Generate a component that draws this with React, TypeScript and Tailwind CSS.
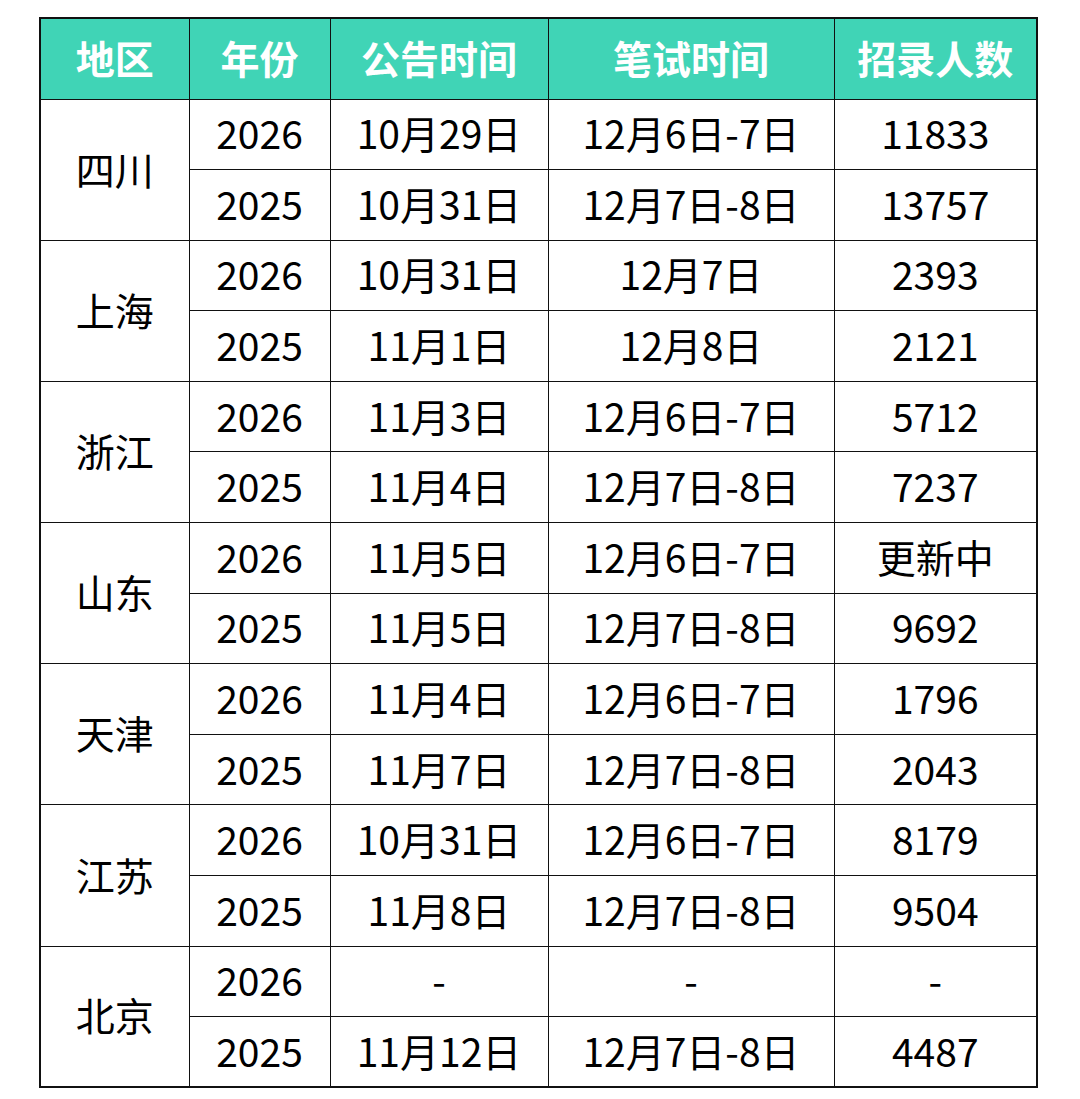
const header = ["地区", "年份", "公告时间", "笔试时间", "招录人数"];

const regions = [
  {
    name: "四川",
    rows: [
      ["2026", "10月29日", "12月6日-7日", "11833"],
      ["2025", "10月31日", "12月7日-8日", "13757"],
    ],
  },
  {
    name: "上海",
    rows: [
      ["2026", "10月31日", "12月7日", "2393"],
      ["2025", "11月1日", "12月8日", "2121"],
    ],
  },
  {
    name: "浙江",
    rows: [
      ["2026", "11月3日", "12月6日-7日", "5712"],
      ["2025", "11月4日", "12月7日-8日", "7237"],
    ],
  },
  {
    name: "山东",
    rows: [
      ["2026", "11月5日", "12月6日-7日", "更新中"],
      ["2025", "11月5日", "12月7日-8日", "9692"],
    ],
  },
  {
    name: "天津",
    rows: [
      ["2026", "11月4日", "12月6日-7日", "1796"],
      ["2025", "11月7日", "12月7日-8日", "2043"],
    ],
  },
  {
    name: "江苏",
    rows: [
      ["2026", "10月31日", "12月6日-7日", "8179"],
      ["2025", "11月8日", "12月7日-8日", "9504"],
    ],
  },
  {
    name: "北京",
    rows: [
      ["2026", "-", "-", "-"],
      ["2025", "11月12日", "12月7日-8日", "4487"],
    ],
  },
];

export default function App() {
  return (
    <div className="w-[1080px] h-[1099px] bg-white pt-[17px] pl-[39px] font-['Noto_Sans_CJK_SC',sans-serif] text-[39px] text-black">
      <table className="border-collapse border-2 border-[#111] table-fixed w-[997px]">
        <colgroup>
          <col className="w-[149px]" />
          <col className="w-[141px]" />
          <col className="w-[218px]" />
          <col className="w-[286px]" />
          <col className="w-[203px]" />
        </colgroup>
        <thead>
          <tr className="h-[81px] bg-[#40d4b6] text-white font-bold">
            {header.map((h) => (
              <th key={h} className="border border-[#111] text-center p-0 pb-[3px] leading-none">
                {h}
              </th>
            ))}
          </tr>
        </thead>
        <tbody>
          {regions.map((r) =>
            r.rows.map((row, i) => (
              <tr key={r.name + i} className="h-[70.6px]">
                {i === 0 && (
                  <td rowSpan={2} className="border border-[#111] text-center p-0 pb-[3px] leading-none">
                    {r.name}
                  </td>
                )}
                {row.map((c, j) => (
                  <td key={j} className="border border-[#111] text-center p-0 pb-[3px] leading-none">
                    {c}
                  </td>
                ))}
              </tr>
            ))
          )}
        </tbody>
      </table>
    </div>
  );
}
